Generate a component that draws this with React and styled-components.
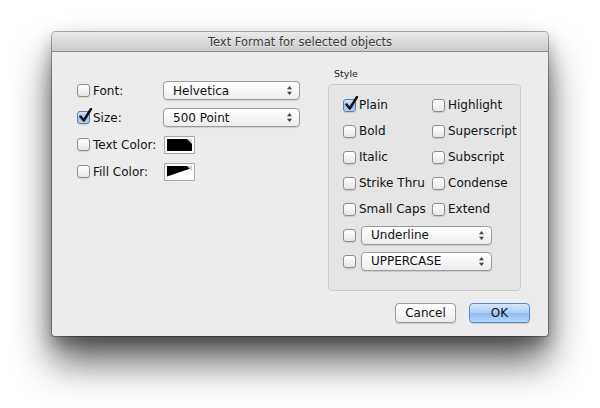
import React from 'react'
import styled, { createGlobalStyle } from 'styled-components'

const GlobalStyle = createGlobalStyle`
  html, body { margin: 0; padding: 0; background: #ffffff; }
  body { font-family: "DejaVu Sans", "Liberation Sans", sans-serif; }
`

const Page = styled.div`
  width: 600px;
  height: 408px;
  padding: 32px 0 0 52px;
  box-sizing: border-box;
  overflow: hidden;
`

const Window = styled.div`
  width: 496px;
  height: 304px;
  box-sizing: border-box;
  background: #ececec;
  border-radius: 4px 4px 3px 3px;
  box-shadow: 0 0 0 1px rgba(0,0,0,0.3), 0 26px 38px rgba(0,0,0,0.62), 0 8px 16px rgba(0,0,0,0.3);
  display: flex;
  flex-direction: column;
  overflow: hidden;
`

const TitleBar = styled.div`
  height: 20px;
  flex: none;
  box-sizing: border-box;
  background: linear-gradient(#ebebeb, #d6d6d6 60%, #cbcbcb);
  border-bottom: 1px solid #8c8c8c;
  display: flex;
  align-items: center;
  justify-content: center;
  font-size: 11.5px;
  color: #3a3a3a;
  text-shadow: 0 1px 0 rgba(255,255,255,0.6);
`

const Body = styled.div`
  flex: 1;
  display: flex;
  flex-direction: column;
  padding: 16px 18px 14px 25px;
`

const Main = styled.div`
  display: flex;
  height: 223px;
`

const LeftPane = styled.div`
  width: 251px;
  padding-top: 9px;
  display: flex;
  flex-direction: column;
`

const Row = styled.div`
  height: 27px;
  display: flex;
  align-items: center;
`

const LabelCell = styled.label`
  width: 86px;
  display: flex;
  align-items: center;
  gap: 3px;
  font-size: 12px;
  color: #111;
`

const Box = styled.span`
  position: relative;
  width: 13px;
  height: 13px;
  flex: none;
  box-sizing: border-box;
  border-radius: 3px;
  border: 1px solid ${p => (p.$checked ? '#5a7fb3' : '#8e8e8e')};
  background: ${p => (p.$checked
    ? 'linear-gradient(#d5e5f8, #9ec1ea 55%, #b7d3f3)'
    : 'linear-gradient(#ffffff, #f1f1f1 60%, #e6e6e6)')};
  box-shadow: 0 1px 1px rgba(0,0,0,0.12);

  svg {
    position: absolute;
    left: 1px;
    top: -4px;
  }
`

const Check = ({ checked }) => (
  <Box $checked={checked}>
    {checked && (
      <svg width="14" height="15" viewBox="0 0 14 15">
        <path d="M1.5 8.5 L4.8 12.5 L12 1" fill="none" stroke="#111" strokeWidth="2.5" strokeLinecap="round" strokeLinejoin="round" />
      </svg>
    )}
  </Box>
)

const Popup = styled.div`
  width: ${p => p.$w}px;
  height: 19px;
  box-sizing: border-box;
  border: 1px solid #9b9b9b;
  border-radius: 4px;
  background: linear-gradient(#ffffff, #f7f7f7 50%, #ececec);
  box-shadow: 0 1px 1px rgba(0,0,0,0.12);
  display: flex;
  align-items: center;
  justify-content: space-between;
  padding: 0 7px 0 9px;
  font-size: 12px;
  color: #111;
`

const Arrows = () => (
  <svg width="5" height="9" viewBox="0 0 5 9">
    <path d="M2.5 0 L5 3.2 L0 3.2 Z M0 5.8 L5 5.8 L2.5 9 Z" fill="#444" />
  </svg>
)

const Select = ({ w, children }) => (
  <Popup $w={w}>
    <span>{children}</span>
    <Arrows />
  </Popup>
)

const Well = styled.div`
  width: 31px;
  height: 18px;
  margin-left: 1px;
  box-sizing: border-box;
  border: 1px solid #a9a9a9;
  background: #fafafa;
  padding: 2px;
  display: flex;

  svg { flex: 1; }
`

const TextWell = () => (
  <Well>
    <svg viewBox="0 0 25 12" preserveAspectRatio="none">
      <rect width="25" height="12" fill="#000" />
      <path d="M20 0 L25 0 L25 5 Z" fill="#cfcfcf" />
    </svg>
  </Well>
)

const FillWell = () => (
  <Well>
    <svg viewBox="0 0 25 12" preserveAspectRatio="none">
      <rect width="25" height="12" fill="#fff" />
      <path d="M0 0 L25 0 L25 2 L0 10.5 Z" fill="#000" />
      <path d="M20 0 L25 0 L25 5 Z" fill="#cfcfcf" />
    </svg>
  </Well>
)

const StyleSection = styled.div`
  width: 193px;
  display: flex;
  flex-direction: column;
`

const GroupTitle = styled.div`
  font-size: 9.5px;
  line-height: 12px;
  color: #222;
  padding-left: 6px;
  margin-bottom: 4px;
`

const GroupBox = styled.div`
  flex: 1;
  box-sizing: border-box;
  border: 1px solid #cbcbcb;
  border-radius: 4px;
  background: #e5e5e5;
  padding: 7px 0 0 14px;
  display: flex;
  flex-direction: column;
`

const StyleGrid = styled.div`
  display: grid;
  grid-template-columns: 89px 1fr;
  grid-auto-rows: 26px;
`

const Option = styled.label`
  display: flex;
  align-items: center;
  gap: 3px;
  font-size: 12px;
  color: #111;
  white-space: nowrap;
`

const PopupRow = styled.div`
  height: 26px;
  display: flex;
  align-items: center;
  gap: 5px;
`

const Footer = styled.div`
  margin-top: 12px;
  display: flex;
  justify-content: flex-end;
  gap: 13px;
`

const Button = styled.button`
  width: ${p => p.$w}px;
  height: 20px;
  padding: 0;
  box-sizing: border-box;
  border-radius: 4px;
  font-family: inherit;
  font-size: 12px;
  color: #111;
  border: 1px solid ${p => (p.$primary ? '#5f89c4' : '#9a9a9a')};
  background: ${p => (p.$primary
    ? 'linear-gradient(#d6e8fc, #a9cdf6 50%, #8cbcf2 51%, #b3d7fb)'
    : 'linear-gradient(#ffffff, #f6f6f6 50%, #ebebeb)')};
  box-shadow: 0 1px 1px rgba(0,0,0,0.15);
`

const styleOptions = [
  ['Plain', 'Highlight'],
  ['Bold', 'Superscript'],
  ['Italic', 'Subscript'],
  ['Strike Thru', 'Condense'],
  ['Small Caps', 'Extend'],
]

export default function App() {
  return (
    <Page>
      <GlobalStyle />
      <Window>
        <TitleBar>Text Format for selected objects</TitleBar>
        <Body>
          <Main>
            <LeftPane>
              <Row>
                <LabelCell><Check />Font:</LabelCell>
                <Select w={137}>Helvetica</Select>
              </Row>
              <Row>
                <LabelCell><Check checked />Size:</LabelCell>
                <Select w={137}>500 Point</Select>
              </Row>
              <Row>
                <LabelCell><Check />Text Color:</LabelCell>
                <TextWell />
              </Row>
              <Row>
                <LabelCell><Check />Fill Color:</LabelCell>
                <FillWell />
              </Row>
            </LeftPane>
            <StyleSection>
              <GroupTitle>Style</GroupTitle>
              <GroupBox>
                <StyleGrid>
                  {styleOptions.flat().map(name => (
                    <Option key={name}><Check checked={name === 'Plain'} />{name}</Option>
                  ))}
                </StyleGrid>
                <PopupRow><Check /><Select w={131}>Underline</Select></PopupRow>
                <PopupRow><Check /><Select w={131}>UPPERCASE</Select></PopupRow>
              </GroupBox>
            </StyleSection>
          </Main>
          <Footer>
            <Button $w={61}>Cancel</Button>
            <Button $w={61} $primary>OK</Button>
          </Footer>
        </Body>
      </Window>
    </Page>
  )
}
